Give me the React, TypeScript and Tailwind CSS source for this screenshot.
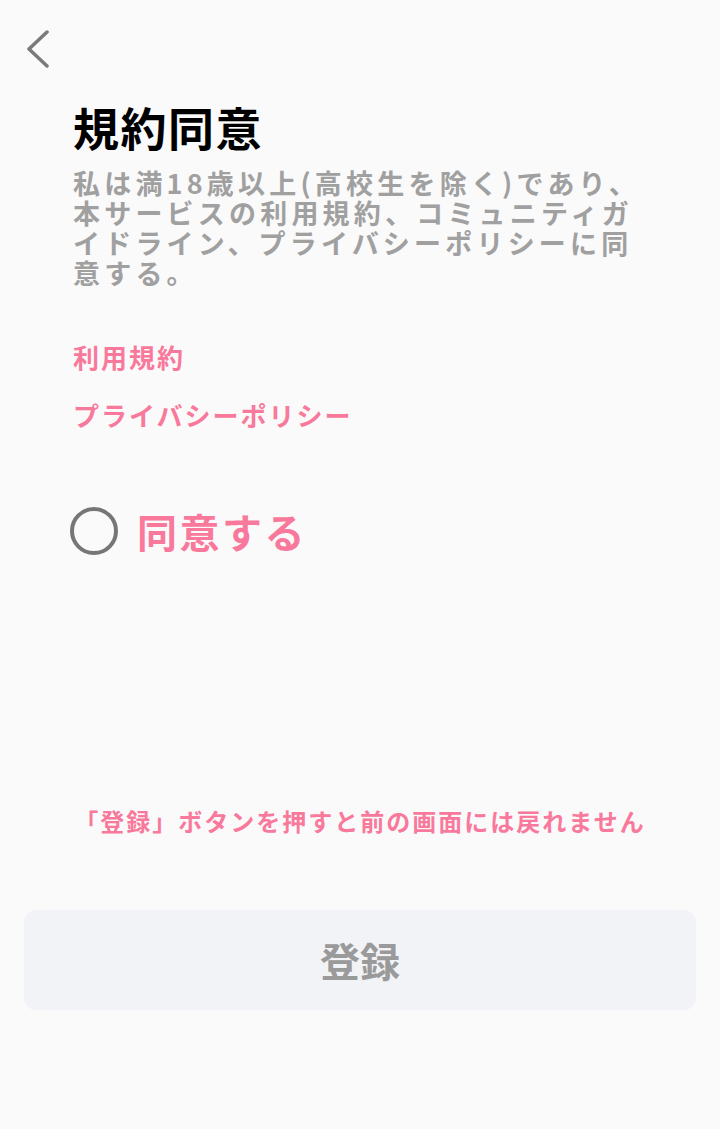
import React, { useState } from 'react';

const font = { fontFamily: '"Noto Sans CJK JP", "Noto Sans", sans-serif' };

export default function App() {
  const [agreed, setAgreed] = useState(false);

  return (
    <div className="min-h-[1129px] w-[720px] bg-[#fafafa] flex flex-col" style={font}>
      <div className="pl-[22px] pt-[30px] h-[70px]">
        <button className="w-[30px] h-[38px] flex items-center justify-center">
          <svg width="28" height="38" viewBox="0 0 28 38" fill="none">
            <path d="M24 2 L6 19 L24 36" stroke="#7a7a7a" strokeWidth="3.5" strokeLinecap="round" strokeLinejoin="round" />
          </svg>
        </button>
      </div>

      <div className="px-[73px]">
        <h1 className="text-[46px] leading-[60px] font-bold text-black mt-[26px] tracking-[1.5px]">規約同意</h1>
        <p className="mt-[12px] text-[27px] leading-[30px] font-bold text-[#a0a0a0] tracking-[4.2px]">
          私は満18歳以上(高校生を除く)であり、<br />
          本サービスの利用規約、コミュニティガ<br />
          イドライン、プライバシーポリシーに同<br />
          意する。
        </p>

        <div className="mt-[51px] flex flex-col items-start gap-[22px]">
          <a className="text-[26px] leading-[36px] font-bold text-[#f8799b] tracking-[2px]">利用規約</a>
          <a className="text-[26px] leading-[36px] font-bold text-[#f8799b] tracking-[2px]">プライバシーポリシー</a>
        </div>

        <button
          className="mt-[74px] flex items-center gap-[19px] -ml-[3px]"
          onClick={() => setAgreed(!agreed)}
        >
          <span className="w-[48px] h-[48px] rounded-full border-[4px] border-[#767676] flex items-center justify-center">
            {agreed && <span className="w-[24px] h-[24px] rounded-full bg-[#f8799b]" />}
          </span>
          <span className="text-[40px] leading-[48px] font-bold text-[#f8799b] tracking-[2.5px]">同意する</span>
        </button>
      </div>

      <p className="mt-[250px] text-center text-[24px] leading-[32px] font-bold text-[#f8799b] tracking-[2px]">
        「登録」ボタンを押すと前の画面には戻れません
      </p>

      <div className="px-[24px] mt-[73px]">
        <button className="w-full h-[100px] rounded-[12px] bg-[#f2f3f7] text-[40px] font-bold text-[#9a9a9a] flex items-center justify-center">
          登録
        </button>
      </div>
    </div>
  );
}
